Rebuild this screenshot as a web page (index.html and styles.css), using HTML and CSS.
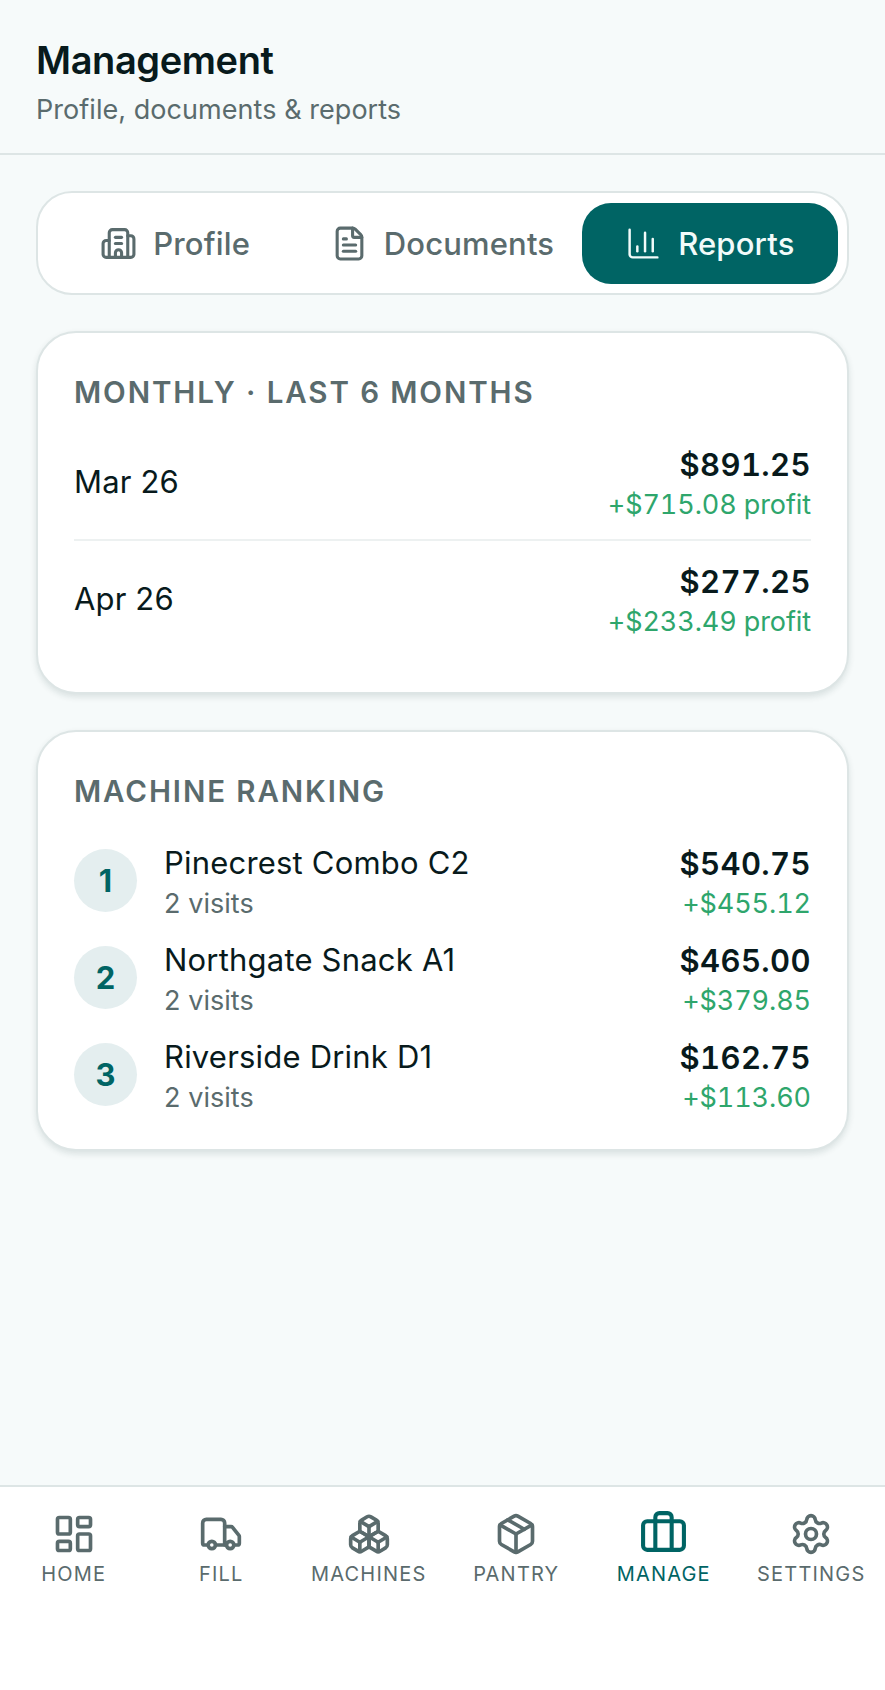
FILE: index.html
```html
<!DOCTYPE html>
<html lang="en">
<head>
<meta charset="utf-8">
<title>Management</title>
<link rel="stylesheet" href="styles.css">
</head>
<body>
<div class="app">
  <header class="header">
    <h1 class="title">Management</h1>
    <p class="subtitle">Profile, documents &amp; reports</p>
  </header>
  <main class="content">
    <div class="tabs">
      <div class="tab">
        <svg class="tab-icon" viewBox="0 0 24 24"><path d="M10 12h4"/><path d="M10 8h4"/><path d="M14 21v-3a2 2 0 0 0-4 0v3"/><path d="M6 10H4a2 2 0 0 0-2 2v7a2 2 0 0 0 2 2h16a2 2 0 0 0 2-2V9a2 2 0 0 0-2-2h-2"/><path d="M6 21V5a2 2 0 0 1 2-2h8a2 2 0 0 1 2 2v16"/></svg>
        <span>Profile</span>
      </div>
      <div class="tab">
        <svg class="tab-icon" viewBox="0 0 24 24"><path d="M6 22a2 2 0 0 1-2-2V4a2 2 0 0 1 2-2h8a2.4 2.4 0 0 1 1.704.706l3.588 3.588A2.4 2.4 0 0 1 20 8v12a2 2 0 0 1-2 2z"/><path d="M14 2v5a1 1 0 0 0 1 1h5"/><path d="M10 9H8"/><path d="M16 13H8"/><path d="M16 17H8"/></svg>
        <span>Documents</span>
      </div>
      <div class="tab tab-active">
        <svg class="tab-icon" viewBox="0 0 24 24"><path d="M3 3v16a2 2 0 0 0 2 2h16"/><path d="M18 17V9"/><path d="M13 17V5"/><path d="M8 17v-3"/></svg>
        <span>Reports</span>
      </div>
    </div>

    <section class="card card-monthly">
      <h2 class="card-title">MONTHLY · LAST 6 MONTHS</h2>
      <div class="month-list">
        <div class="month-row">
          <span class="month">Mar 26</span>
          <div class="figures"><span class="amount">$891.25</span><span class="profit">+$715.08 profit</span></div>
        </div>
        <div class="month-row">
          <span class="month">Apr 26</span>
          <div class="figures"><span class="amount">$277.25</span><span class="profit">+$233.49 profit</span></div>
        </div>
      </div>
    </section>

    <section class="card card-ranking">
      <h2 class="card-title">MACHINE RANKING</h2>
      <div class="rank-list">
        <div class="rank-row">
          <span class="rank">1</span>
          <div class="machine"><span class="machine-name">Pinecrest Combo C2</span><span class="visits">2 visits</span></div>
          <div class="figures"><span class="amount">$540.75</span><span class="profit">+$455.12</span></div>
        </div>
        <div class="rank-row">
          <span class="rank">2</span>
          <div class="machine"><span class="machine-name">Northgate Snack A1</span><span class="visits">2 visits</span></div>
          <div class="figures"><span class="amount">$465.00</span><span class="profit">+$379.85</span></div>
        </div>
        <div class="rank-row">
          <span class="rank">3</span>
          <div class="machine"><span class="machine-name">Riverside Drink D1</span><span class="visits">2 visits</span></div>
          <div class="figures"><span class="amount">$162.75</span><span class="profit">+$113.60</span></div>
        </div>
      </div>
    </section>
  </main>
  <nav class="nav">
    <div class="nav-item">
      <svg class="nav-icon" viewBox="0 0 24 24"><rect x="3" y="3" width="7" height="9" rx="1"/><rect x="14" y="3" width="7" height="5" rx="1"/><rect x="14" y="12" width="7" height="9" rx="1"/><rect x="3" y="16" width="7" height="5" rx="1"/></svg>
      <span>HOME</span>
    </div>
    <div class="nav-item">
      <svg class="nav-icon" viewBox="0 0 24 24"><path d="M14 18V6a2 2 0 0 0-2-2H4a2 2 0 0 0-2 2v11a1 1 0 0 0 1 1h2"/><path d="M15 18H9"/><path d="M19 18h2a1 1 0 0 0 1-1v-3.65a1 1 0 0 0-.22-.624l-3.48-4.35A1 1 0 0 0 17.52 8H14"/><circle cx="17" cy="18" r="2"/><circle cx="7" cy="18" r="2"/></svg>
      <span>FILL</span>
    </div>
    <div class="nav-item">
      <svg class="nav-icon" viewBox="0 0 24 24"><path d="M2.97 12.92A2 2 0 0 0 2 14.63v3.24a2 2 0 0 0 .97 1.71l3 1.8a2 2 0 0 0 2.06 0L12 19v-5.5l-5-3-4.03 2.42Z"/><path d="m7 16.5-4.74-2.85"/><path d="m7 16.5 5-3"/><path d="M7 16.5v5.17"/><path d="M12 13.5V19l3.97 2.38a2 2 0 0 0 2.06 0l3-1.8a2 2 0 0 0 .97-1.71v-3.24a2 2 0 0 0-.97-1.71L17 10.5l-5 3Z"/><path d="m17 16.5-5-3"/><path d="m17 16.5 4.74-2.85"/><path d="M17 16.5v5.17"/><path d="M7.97 4.42A2 2 0 0 0 7 6.13v4.37l5 3 5-3V6.13a2 2 0 0 0-.97-1.71l-3-1.8a2 2 0 0 0-2.06 0l-3 1.8Z"/><path d="M12 8 7.26 5.15"/><path d="m12 8 4.74-2.85"/><path d="M12 13.5V8"/></svg>
      <span>MACHINES</span>
    </div>
    <div class="nav-item">
      <svg class="nav-icon" viewBox="0 0 24 24"><path d="M11 21.73a2 2 0 0 0 2 0l7-4a2 2 0 0 0 1-1.73V8a2 2 0 0 0-1-1.73l-7-4a2 2 0 0 0-2 0l-7 4A2 2 0 0 0 3 8v8a2 2 0 0 0 1 1.73z"/><path d="M12 22V12"/><polyline points="3.29 7 12 12 20.71 7"/><path d="m7.5 4.27 9 5.15"/></svg>
      <span>PANTRY</span>
    </div>
    <div class="nav-item nav-active">
      <svg class="nav-icon" viewBox="0 0 24 24"><path d="M16 20V4a2 2 0 0 0-2-2h-4a2 2 0 0 0-2 2v16"/><rect x="2" y="6" width="20" height="14" rx="2"/></svg>
      <span>MANAGE</span>
    </div>
    <div class="nav-item">
      <svg class="nav-icon" viewBox="0 0 24 24"><path d="M9.671 4.136a2.34 2.34 0 0 1 4.659 0 2.34 2.34 0 0 0 3.319 1.915 2.34 2.34 0 0 1 2.33 4.033 2.34 2.34 0 0 0 0 3.831 2.34 2.34 0 0 1-2.33 4.033 2.34 2.34 0 0 0-3.319 1.915 2.34 2.34 0 0 1-4.659 0 2.34 2.34 0 0 0-3.32-1.915 2.34 2.34 0 0 1-2.33-4.033 2.34 2.34 0 0 0 0-3.831A2.34 2.34 0 0 1 6.35 6.051a2.34 2.34 0 0 0 3.319-1.915"/><circle cx="12" cy="12" r="3"/></svg>
      <span>SETTINGS</span>
    </div>
  </nav>
</div>
</body>
</html>
```

FILE: styles.css
```css
* { box-sizing: border-box; }
html, body { margin: 0; padding: 0; }
body {
  font-family: Inter, "Liberation Sans", sans-serif;
  background: #f6fafa;
  color: #081a1c;
}
.app {
  width: 885px;
  height: 1690px;
  display: flex;
  flex-direction: column;
}
.header {
  height: 155px;
  padding: 37px 36px 0;
  border-bottom: 2px solid #dde5e5;
}
.title {
  margin: 0;
  font-size: 38px;
  line-height: 46px;
  font-weight: 600;
  letter-spacing: -0.4px;
  color: #081a1c;
}
.subtitle {
  margin: 10px 0 0;
  font-size: 27px;
  line-height: 34px;
  letter-spacing: 0.05px;
  color: #5a6b6d;
}
.content {
  flex: 1;
  padding: 36px 36px 0;
  display: flex;
  flex-direction: column;
  gap: 36px;
}
.tabs {
  height: 104px;
  display: grid;
  grid-template-columns: repeat(3, 1fr);
  column-gap: 11px;
  padding: 10px 9px 9px;
  background: #fff;
  border: 2px solid #dde5e5;
  border-radius: 36px;
}
.tab {
  display: flex;
  align-items: center;
  justify-content: center;
  gap: 16px;
  border-radius: 29px;
  font-size: 31px;
  font-weight: 500;
  letter-spacing: 0.15px;
  color: #5a6b6d;
}
.tab-active { background: #006464; color: #f2fbfa; }
.tab-icon {
  width: 37px;
  height: 37px;
  fill: none;
  stroke: currentColor;
  stroke-width: 2;
  stroke-linecap: round;
  stroke-linejoin: round;
}
.tab-active .tab-icon { stroke-width: 1.6; }
.card {
  background: #fff;
  border: 2px solid #dde5e5;
  border-radius: 40px;
  box-shadow: 0 3px 6px rgba(20, 50, 50, 0.12);
}
.card-monthly { padding: 41px 36px 37px; }
.card-ranking { padding: 41px 36px 26px; }
.card-title {
  margin: 0;
  font-size: 29.5px;
  line-height: 36px;
  font-weight: 600;
  letter-spacing: 1.9px;
  color: #5a6b6d;
}
.month-list { margin-top: 14px; }
.month-row {
  height: 115px;
  display: flex;
  align-items: center;
  justify-content: space-between;
}
.month-row + .month-row {
  height: 116px;
  border-top: 2px solid #edf1f1;
}
.month {
  font-size: 31px;
  letter-spacing: 0.15px;
  color: #081a1c;
}
.figures {
  display: flex;
  flex-direction: column;
  align-items: flex-end;
  padding-top: 6px;
  font-variant-numeric: tabular-nums;
}
.month-row .figures { padding-top: 7px; }
.amount {
  font-size: 31px;
  line-height: 40px;
  font-weight: 600;
  letter-spacing: 0.4px;
  color: #081a1c;
}
.profit {
  font-size: 27px;
  line-height: 40px;
  letter-spacing: -0.1px;
  color: #2ea66c;
}
.rank-list { margin-top: 23px; }
.rank-row {
  height: 97px;
  display: flex;
  align-items: center;
}
.rank {
  flex: none;
  width: 63px;
  height: 63px;
  border-radius: 50%;
  background: #e4eeef;
  color: #006464;
  display: flex;
  align-items: center;
  justify-content: center;
  font-size: 31px;
  font-weight: 700;
}
.machine {
  flex: 1;
  margin-left: 27px;
  padding-top: 6px;
  display: flex;
  flex-direction: column;
}
.machine-name {
  font-size: 31px;
  line-height: 40px;
  letter-spacing: 0.2px;
  color: #081a1c;
}
.visits {
  font-size: 27px;
  line-height: 42px;
  letter-spacing: 0.05px;
  color: #5a6b6d;
}
.nav {
  height: 205px;
  background: #fff;
  border-top: 2px solid #dde5e5;
  display: grid;
  grid-template-columns: repeat(6, 1fr);
  align-items: start;
  padding-top: 25px;
}
.nav-item {
  height: 74px;
  display: flex;
  flex-direction: column;
  align-items: center;
  justify-content: space-between;
  font-size: 20px;
  line-height: 24px;
  font-weight: 400;
  letter-spacing: 1.2px;
  color: #5a6b6d;
}
.nav-active { color: #006464; }
.nav-icon {
  width: 44px;
  height: 44px;
  fill: none;
  stroke: currentColor;
  stroke-width: 2;
  stroke-linecap: round;
  stroke-linejoin: round;
}
.nav-active .nav-icon { width: 49px; height: 49px; margin-top: -3px; }
```
